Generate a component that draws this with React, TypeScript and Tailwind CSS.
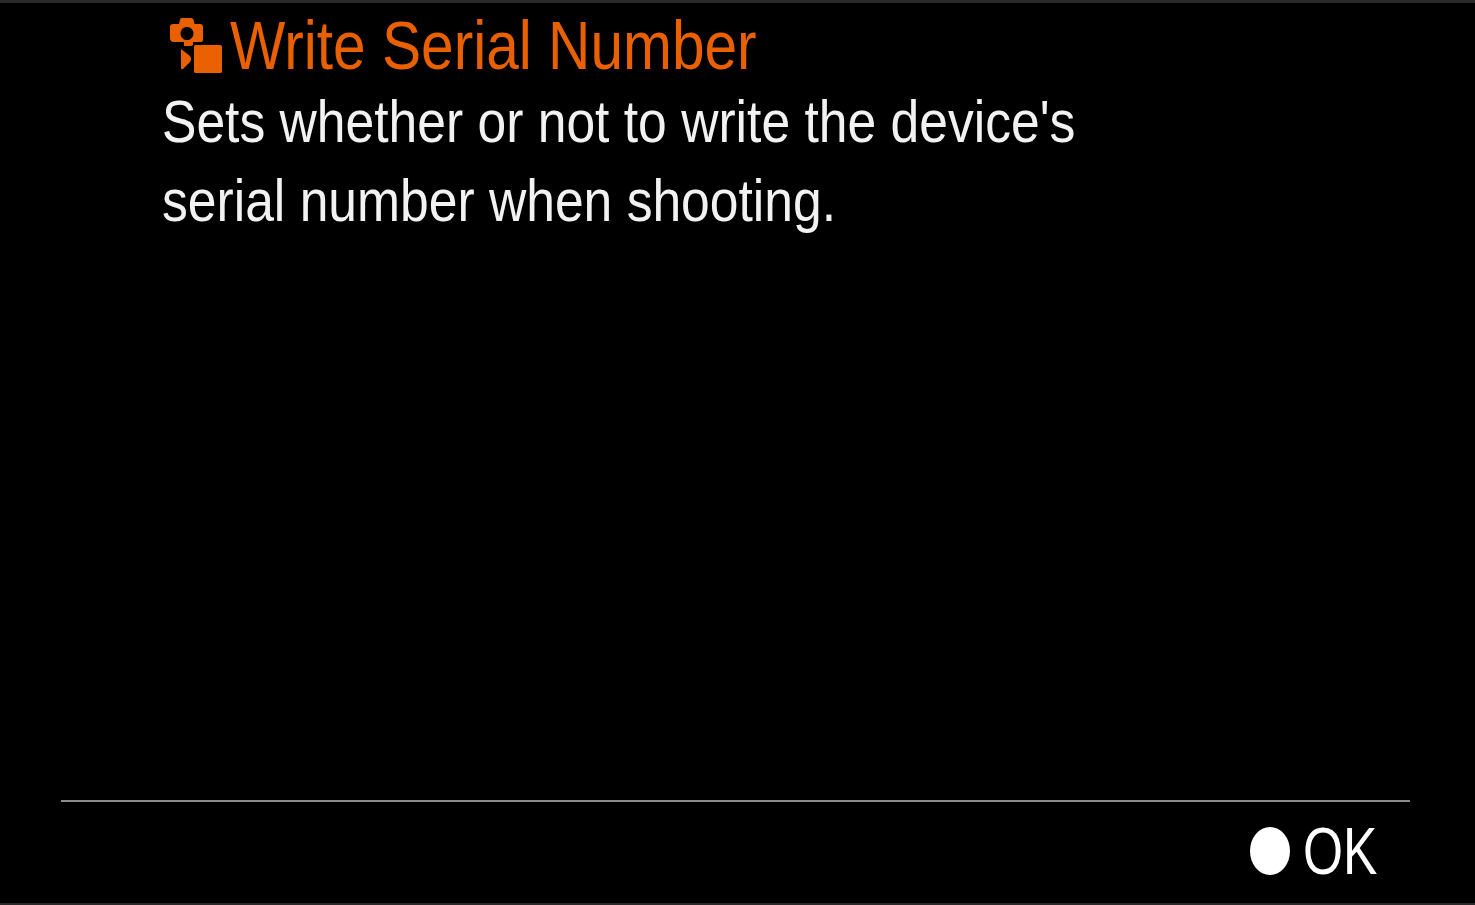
export default function App() {
  return (
    <div className="w-[1475px] h-[905px] bg-black flex flex-col overflow-hidden border-t-[3px] border-b-2 border-[#2a2a2a]" style={{ fontFamily: '"Liberation Sans", Arial, sans-serif' }}>
      <div className="flex-1 pl-[162px] min-h-0">
        <div className="flex items-center h-[79px] pl-[7px] gap-[8px]">
          <svg width="53" height="56" viewBox="0 0 53 56" className="shrink-0 mt-[6px]">
            <path fill="#e86000" fillRule="evenodd" d="M11 1.500Q11 0 13 0h9q2 0 2.500 1.500L25.500 6H31q3 0 3 3v13q0 2-2 2h-8v3q-1 1-3 1h-6v-4H5q-4 0-4-4V9q0-3 3-3h6zM18 9a6.500 6.500 0 1 0 0.010 0z" />
            <path fill="#e86000" d="M12 31l9 7q1 1 1 3t-1 3l-7 7q-2 1-2-1z" />
            <rect x="25" y="27" width="28" height="28" rx="1.500" fill="#e86000" />
          </svg>
          <span className="text-[#e86000] text-[68px] leading-none scale-x-[0.862] origin-left whitespace-nowrap mt-[5px]">Write Serial Number</span>
        </div>
        <p className="text-[#f2f2f2] text-[60px] leading-[79px] scale-x-[0.86] origin-left whitespace-nowrap">Sets whether or not to write the device's<br />serial number when shooting.</p>
      </div>
      <div className="ml-[61px] mr-[65px] h-[2px] bg-[#8a8a8a]"></div>
      <div className="h-[101px] flex items-center justify-end pr-[98px] gap-[13px]">
        <div className="w-[40px] h-[48px] rounded-[50%] bg-white -mt-[4px]"></div>
        <span className="text-white text-[66px] leading-none scale-x-[0.78] origin-right -ml-[21px] -mt-[4px]">OK</span>
      </div>
    </div>
  );
}
